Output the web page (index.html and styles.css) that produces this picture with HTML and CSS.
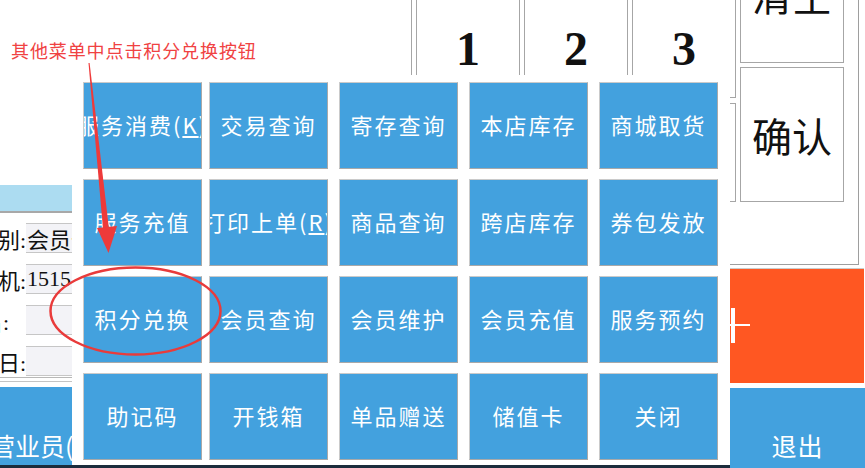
FILE: index.html
```html
<!DOCTYPE html>
<html>
<head>
<meta charset="utf-8">
<title>收银台 - 其他菜单</title>
<link rel="stylesheet" href="styles.css">
</head>
<body>

<div class="screen">
  <div class="member">
    <div class="member-title"></div>
    <div class="member-form">
      <div class="field"><span class="field-label">卡类别:</span><span class="field-input">会员卡</span></div>
      <div class="field"><span class="field-label">手机:</span><span class="field-input">15151234567</span></div>
      <div class="field"><span class="field-label field-label-short">姓名:</span><span class="field-input"></span></div>
      <div class="field"><span class="field-label">生日:</span><span class="field-input"></span></div>
    </div>
    <div class="member-divider"></div>
    <div class="staff"><span>营业员(001)</span></div>
    <div class="taskbar"></div>
  </div>

  <div class="cashier">
    <div class="keypad">
      <div class="keys">
        <div class="key key-first"></div>
        <div class="key">1</div>
        <div class="key">2</div>
        <div class="key">3</div>
        <div class="key key-low key-first"></div>
        <div class="key key-low"></div>
        <div class="key key-low"></div>
        <div class="key key-low"></div>
      </div>
      <div class="key-side">
        <div class="key key-text key-clear"><span>清空</span></div>
        <div class="key key-text key-ok">确认</div>
      </div>
    </div>
    <div class="btn-add">
      <svg width="34" height="36" viewBox="0 0 34 36"><rect x="0" y="16" width="32" height="2" fill="#fff"/><rect x="13" y="0" width="4" height="35" fill="#fff"/></svg>
    </div>
    <div class="btn-exit">退出</div>
  </div>
</div>

<div class="popup">
  <div class="menu-grid">
    <div class="menu-btn">服务消费(<u>K</u>)</div>
    <div class="menu-btn">交易查询</div>
    <div class="menu-btn">寄存查询</div>
    <div class="menu-btn">本店库存</div>
    <div class="menu-btn">商城取货</div>

    <div class="menu-btn">服务充值</div>
    <div class="menu-btn">打印上单(<u>R</u>)</div>
    <div class="menu-btn">商品查询</div>
    <div class="menu-btn">跨店库存</div>
    <div class="menu-btn">券包发放</div>

    <div class="menu-btn">积分兑换</div>
    <div class="menu-btn">会员查询</div>
    <div class="menu-btn">会员维护</div>
    <div class="menu-btn">会员充值</div>
    <div class="menu-btn">服务预约</div>

    <div class="menu-btn">助记码</div>
    <div class="menu-btn">开钱箱</div>
    <div class="menu-btn">单品赠送</div>
    <div class="menu-btn">储值卡</div>
    <div class="menu-btn">关闭</div>
  </div>
</div>

<div class="note">其他菜单中点击积分兑换按钮</div>
<svg class="marks" width="865" height="468" viewBox="0 0 865 468">
  <polygon points="88.5,63 89.6,63 109,229 103,229" fill="#ee3a3a"/>
  <polygon points="97,228 117,226 108.5,253" fill="#ee3a3a"/>
  <ellipse cx="135.5" cy="311" rx="85" ry="43.5" fill="none" stroke="#e93b3b" stroke-width="2.5"/>
</svg>

</body>
</html>
```

FILE: styles.css
```css
* {
    box-sizing: border-box;
}
body {
    margin: 0;
    width: 865px;
    height: 468px;
    overflow: hidden;
    position: relative;
    background-color: white;
    font-family: "Noto Sans CJK SC", sans-serif;
}
.screen {
    display: flex;
    height: 468px;
}

/* left: member info */
.member {
    width: 308px;
    display: flex;
    flex-direction: column;
}
.member-title {
    margin-top: 185px;
    height: 28px;
    background-color: #acdcf1;
    border-bottom: 2px solid #a8a8a8;
}
.member-form {
    padding-top: 10px;
    padding-bottom: 1px;
    border-bottom: 1px solid #b8b8b8;
    display: flex;
    flex-direction: column;
    gap: 11px;
}
.field {
    display: flex;
    height: 30px;
}
.field-label {
    position: relative;
    z-index: 1;
    width: 26px;
    display: flex;
    justify-content: flex-end;
    align-items: center;
    overflow: hidden;
    white-space: nowrap;
    background-color: white;
    font-family: "Liberation Serif", "Noto Sans CJK SC", serif;
    font-size: 22px;
    color: #111;
}
.field-label-short {
    padding-right: 17px;
}
.field-input {
    flex: 1;
    margin-left: -12px;
    padding-left: 12px;
    display: flex;
    align-items: center;
    overflow: hidden;
    white-space: nowrap;
    background-color: #f3f3f7;
    border: 1px solid #c6c6c6;
    font-family: "Liberation Serif", "Noto Sans CJK SC", serif;
    font-size: 22px;
    color: #111;
}
.member-divider {
    margin-top: 3px;
    border-top: 1px solid #c4c4c4;
}
.staff {
    margin-top: 5px;
    flex: 1;
    background-color: #43a1de;
    color: white;
    font-size: 25px;
    display: flex;
    align-items: flex-end;
    padding-bottom: 3px;
    overflow: hidden;
    white-space: nowrap;
}
.staff span {
    margin-left: -10px;
    line-height: 34px;
}
.taskbar {
    height: 3px;
    background-color: #1b2c3c;
}

/* right: keypad */
.cashier {
    flex: 1;
    display: flex;
    flex-direction: column;
}
.keypad {
    width: 551px;
    height: 265px;
    display: flex;
    gap: 4px;
    padding-right: 13px;
    border-right: 1px solid #9e9e9e;
    border-bottom: 1px solid #9e9e9e;
}
.keys {
    display: grid;
    grid-template-columns: repeat(4, 104px);
    grid-template-rows: 98px 99px;
    column-gap: 4px;
    row-gap: 5px;
    align-content: start;
}
.key {
    border: 1px solid #a6a6a6;
    border-top: none;
    display: flex;
    align-items: center;
    justify-content: center;
    font-family: "Liberation Serif", serif;
    font-weight: bold;
    font-size: 48px;
    line-height: 1;
    color: #111;
}
.key-low {
    border-top: 1px solid #a6a6a6;
}
.key-first {
    border-left: none;
}
.key-side {
    width: 104px;
    display: flex;
    flex-direction: column;
    gap: 4px;
}
.key-text {
    font-family: "Noto Sans CJK SC", sans-serif;
    font-weight: normal;
    font-size: 40px;
}
.key-clear {
    height: 63px;
    align-items: flex-start;
}
.key-clear span {
    margin-top: -26px;
    line-height: 40px;
}
.key-ok {
    height: 135px;
    border-top: 1px solid #a6a6a6;
}
.btn-add {
    margin-top: 3px;
    margin-left: 298px;
    width: 258px;
    height: 115px;
    background-color: #ff5722;
    border-top: 1px solid #cbcbcb;
    display: flex;
    align-items: center;
    justify-content: center;
}
.btn-exit {
    margin-top: 5px;
    margin-left: 422px;
    flex: 1;
    background-color: #43a1de;
    color: white;
    font-size: 25px;
    letter-spacing: 1px;
    text-align: center;
    padding-top: 40px;
    line-height: 34px;
}

/* popup: other menu */
.popup {
    position: absolute;
    left: 72px;
    top: 75px;
    width: 658px;
    height: 393px;
    background-color: white;
    border-bottom: 3px solid #1b2c3c;
    padding: 7px 0 0 11px;
}
.menu-grid {
    display: grid;
    grid-template-columns: 115px repeat(4, 119px);
    grid-template-rows: repeat(4, 87px);
    column-gap: 11px;
    row-gap: 10px;
}
.menu-btn {
    display: flex;
    align-items: center;
    justify-content: center;
    overflow: hidden;
    white-space: nowrap;
    background-color: #43a1de;
    color: white;
    border: 1px solid #a9a9a9;
    border-top-color: #cacaca;
    border-left-color: #cacaca;
    font-size: 22px;
    letter-spacing: 2px;
    padding-bottom: 3px;
}
.menu-btn:nth-child(5n+1) {
    margin-right: -4px;
}

/* annotation */
.note {
    position: absolute;
    left: 11px;
    top: 38px;
    color: #f04242;
    font-size: 18px;
    letter-spacing: 0.9px;
    line-height: 24px;
    white-space: nowrap;
}
.marks {
    position: absolute;
    left: 0;
    top: 0;
    pointer-events: none;
}
```
